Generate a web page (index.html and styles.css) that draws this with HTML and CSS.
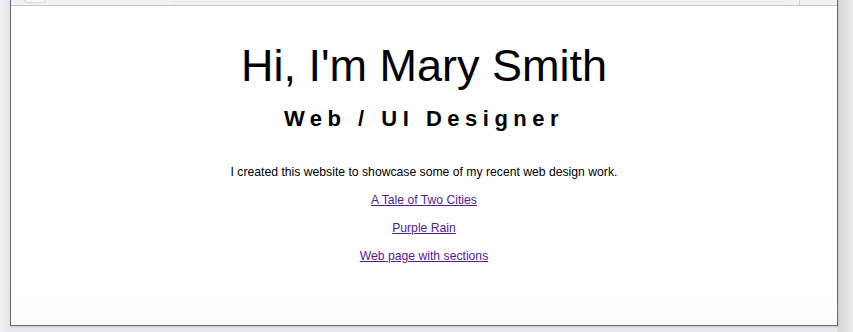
FILE: index.html
```html
<!DOCTYPE html>
<html lang="en">
<head>
<meta charset="utf-8">
<title>Mary Smith</title>
<link rel="stylesheet" href="styles.css">
</head>
<body>
<div class="desktop">
  <div class="window">
    <div class="toolbar">
      <span class="btn"></span>
      <span class="address"></span>
      <span class="sep"></span>
    </div>
    <main class="page">
      <h1 class="title">Hi, I'm Mary Smith</h1>
      <h2 class="subtitle">Web / UI Designer</h2>
      <p class="intro">I created this website to showcase some of my recent web design work.</p>
      <p class="link-row"><a href="#tale">A Tale of Two Cities</a></p>
      <p class="link-row"><a href="#purple">Purple Rain</a></p>
      <p class="link-row"><a href="#sections">Web page with sections</a></p>
    </main>
  </div>
</div>
</body>
</html>
```
FILE: styles.css
```css
html, body {
  margin: 0;
  padding: 0;
  height: 332px;
  overflow: hidden;
}
body {
  background: #e6e7e9;
  font-family: "Liberation Sans", Arial, sans-serif;
}
.desktop {
  display: flex;
  height: 332px;
  padding-left: 10px;
  background: linear-gradient(to right, #eff0f2 0, #e8e9eb 10px, #e8e9eb 837px, #d6d6d6 838px, #ebebeb 853px);
  box-sizing: border-box;
}
.window {
  width: 826px;
  height: 325px;
  border-left: 1px solid #6b6b6b;
  border-right: 1px solid #6b6b6b;
  border-bottom: 1px solid #6b6b6b;
  background: #ffffff;
  display: flex;
  flex-direction: column;
  box-shadow: 0 1px 2px rgba(0,0,0,0.15);
}
.toolbar {
  height: 5px;
  flex: none;
  background: #f1f2f4;
  border-bottom: 1px solid #c9c9c9;
  display: flex;
  align-items: flex-start;
}
.btn {
  width: 20px;
  height: 2px;
  margin-left: 13px;
  border: 1px solid #d6d6d6;
  border-top: none;
  border-radius: 0 0 10px 10px;
  background: #f7f7f7;
}
.address {
  width: 611px;
  height: 1px;
  margin-left: 127px;
  border-bottom: 1px solid #e2e3e5;
  background: #f4f5f6;
}
.sep {
  width: 1px;
  height: 5px;
  margin-left: 15px;
  background: #d0d0d0;
}
.page {
  flex: 1;
  text-align: center;
  color: #000;
  background: linear-gradient(to bottom, #ffffff 0, #ffffff 270px, #fcfcfc 319px);
}
.title {
  margin: 34px 0 0;
  font-size: 45px;
  font-weight: normal;
  line-height: 52px;
}
.subtitle {
  margin: 14px 0 0;
  font-size: 22px;
  font-weight: bold;
  letter-spacing: 5.5px;
  line-height: 25px;
}
.intro {
  margin: 34px 0 0;
  font-size: 12.2px;
  line-height: 15px;
}
.link-row {
  margin: 13px 0 0;
  font-size: 12.2px;
  line-height: 15px;
}
.link-row a {
  color: #551a8b;
}
```
